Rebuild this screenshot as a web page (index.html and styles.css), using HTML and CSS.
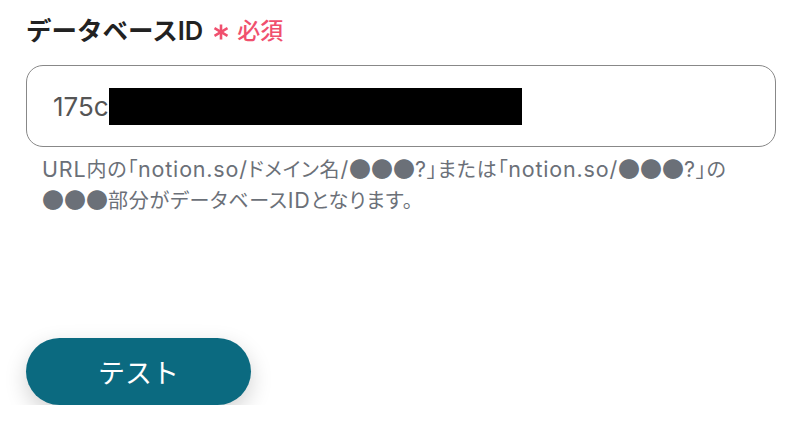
FILE: index.html
```html
<!DOCTYPE html>
<html lang="ja">
<head>
    <meta charset="UTF-8">
    <meta name="viewport" content="width=device-width, initial-scale=1.0">
    <title>データベースID</title>
    <link rel="stylesheet" href="styles.css">
</head>
<body>

<div class="field">
    <div class="field-label">
        データベースID
        <span class="required">
            <svg class="star" width="16" height="16" viewBox="0 0 16 16" aria-hidden="true">
                <g stroke="#f0506e" stroke-width="2.6" stroke-linecap="butt">
                    <line x1="8" y1="0.5" x2="8" y2="15.5"/>
                    <line x1="1.5" y1="4.2" x2="14.5" y2="11.8"/>
                    <line x1="1.5" y1="11.8" x2="14.5" y2="4.2"/>
                </g>
            </svg>必須
        </span>
    </div>

    <div class="input-box">
        <span class="input-value">175c</span><span class="redacted"></span>
    </div>

    <p class="help"><span class="en">URL</span>内の「<span class="en">notion.so/</span>ドメイン名<span class="en">/</span><span class="dots">●●●</span><span class="en">?</span>」または「<span class="en">notion.so/</span><span class="dots">●●●</span><span class="en">?</span>」の<br><span class="dots">●●●</span>部分がデータベース<span class="en">ID</span>となります。</p>
</div>

<button class="test-btn">テスト</button>

</body>
</html>
```

FILE: styles.css
```css
body {
    margin: 0;
    padding: 14px 16px 0 26px;
    background: #fff;
    font-family: Inter, "Noto Sans CJK JP", sans-serif;
    color: #222;
}

.field-label {
    font-size: 25.5px;
    font-weight: 600;
    line-height: 34px;
    display: flex;
    align-items: center;
    gap: 10px;
}

.required {
    color: #f0506e;
    font-size: 23px;
    font-weight: 500;
    display: flex;
    align-items: center;
    gap: 8px;
}

.star {
    display: block;
    margin-top: 2px;
}

.input-box {
    margin-top: 17px;
    height: 80px;
    border: 1px solid #888;
    border-radius: 17px;
    display: flex;
    align-items: center;
    padding-left: 26px;
}

.input-value {
    font-size: 26px;
    color: #555;
}

.redacted {
    display: inline-block;
    width: 413px;
    height: 37px;
    background: #000;
}

.help {
    margin: 8px 0 0 16px;
    font-size: 20px;
    line-height: 31px;
    color: #6b7078;
    white-space: nowrap;
    letter-spacing: 0.04em;
    font-feature-settings: "palt";
}

.help .en {
    font-size: 21.5px;
    line-height: 1;
}

.dots {
    font-family: "Noto Sans CJK JP", sans-serif;
    font-feature-settings: normal;
    font-size: 22px;
    letter-spacing: 0;
    line-height: 1;
}

.test-btn {
    display: block;
    margin-top: 121px;
    width: 225px;
    height: 67px;
    border: none;
    border-radius: 34px;
    background: #0b6a80;
    color: #fff;
    font-family: inherit;
    font-size: 27px;
    box-shadow: 0 8px 22px rgba(0, 0, 0, 0.18);
}
```
